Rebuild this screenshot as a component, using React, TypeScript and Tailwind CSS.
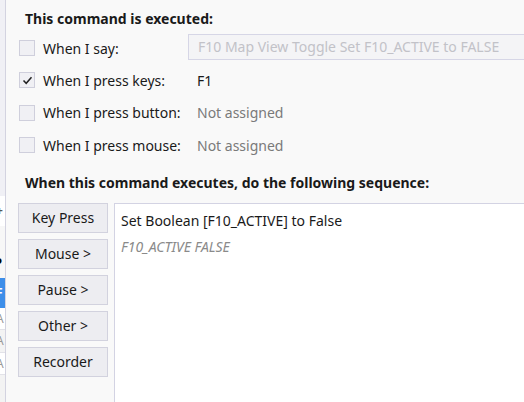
const font = "font-['Segoe_UI','Noto_Sans','Open_Sans',sans-serif]";

interface TriggerRow {
  label: string;
  value: string;
  checked: boolean;
  muted: boolean;
}

const triggers: TriggerRow[] = [
  { label: "When I press keys:", value: "F1", checked: true, muted: false },
  { label: "When I press button:", value: "Not assigned", checked: false, muted: true },
  { label: "When I press mouse:", value: "Not assigned", checked: false, muted: true },
];

const actions = ["Key Press", "Mouse >", "Pause >", "Other >", "Recorder"];

const Checkbox = ({ checked }: { checked: boolean }) => (
  <div className="w-[16px] h-[16px] border border-[#cfcfdc] bg-[#f0f0f4] flex items-center justify-center shrink-0">
    {checked && (
      <svg width="11" height="11" viewBox="0 0 11 11">
        <path d="M1.5 5.5 L4.2 8.3 L9.5 2.2" fill="none" stroke="#222" strokeWidth="1.5" />
      </svg>
    )}
  </div>
);

const SideSliver = () => (
  <div className="w-[6px] shrink-0 border-r border-[#d3d3e0] flex flex-col text-[12px] overflow-hidden">
    <div className="h-[196px] bg-[#f0f0f5]" />
    <div className="h-[30px] bg-white flex items-center text-[#555] font-bold">
      <span className="-ml-[4px]">+</span>
    </div>
    <div className="h-[22px] bg-[#f7f7f7]" />
    <div className="h-[30px] bg-[#f7f7f7] flex items-center font-bold text-black text-[13px]">
      <span className="-ml-[6px]">P</span>
    </div>
    <div className="h-[30px] bg-[#3d8ee9] flex items-center text-white font-bold">
      <span className="-ml-[4px]">F</span>
    </div>
    <div className="h-[22px] bg-white border-b border-[#e2e2e8] text-[#999] flex items-center">
      <span className="-ml-[4px]">A</span>
    </div>
    <div className="h-[23px] bg-[#f3f3f3] border-b border-[#e2e2e8] text-[#999] flex items-center">
      <span className="-ml-[4px]">A</span>
    </div>
    <div className="h-[22px] bg-white border-b border-[#e2e2e8] text-[#999] flex items-center">
      <span className="-ml-[4px]">A</span>
    </div>
    <div className="flex-1 bg-[#f3f3f3]" />
  </div>
);

const App = () => {
  return (
    <div className={`w-[524px] h-[402px] overflow-hidden bg-[#f9f9f9] flex ${font} text-[14px] text-[#1a1a1a]`}>
      <SideSliver />
      <div className="flex-1 flex flex-col pl-[12px]">
        <div className="pt-[8px] pl-[7px] font-bold h-[22px] leading-[22px]">This command is executed:</div>

        <div className="mt-[10px] pl-[1px] flex flex-col">
          <div className="h-[32px] flex items-center">
            <Checkbox checked={false} />
            <span className="ml-[8px] w-[145px]">When I say:</span>
            <div className="flex-1 h-[26px] -mr-[2px] -mt-[3px] border border-[#d6d6e6] border-r-0 bg-[#f4f4f6] flex items-center pl-[9px] text-[#c2c2c8] whitespace-nowrap overflow-hidden">
              F10 Map View Toggle Set F10_ACTIVE to FALSE
            </div>
          </div>
          {triggers.map((row, index) => (
            <div key={"trigger-" + index} className="h-[32.5px] flex items-center">
              <Checkbox checked={row.checked} />
              <span className="ml-[8px] w-[154px]">{row.label}</span>
              <span className={row.muted ? "text-[#7a7a7a]" : "text-[#1a1a1a]"}>{row.value}</span>
            </div>
          ))}
        </div>

        <div className="mt-[10px] pl-[7px] font-bold h-[22px] leading-[22px]">
          When this command executes, do the following sequence:
        </div>

        <div className="mt-[9px] flex flex-1 gap-[6px]">
          <div className="w-[90px] flex flex-col gap-[6px] shrink-0">
            {actions.map((label) => (
              <div
                key={label}
                className="h-[30px] bg-[#ededf1] border border-[#d2d2de] flex items-center justify-center"
              >
                {label}
              </div>
            ))}
          </div>
          <div className="flex-1 bg-white border border-[#d3d3e3] border-r-0 border-b-0 pl-[6px] pt-[7px]">
            <div className="leading-[20px]">Set Boolean [F10_ACTIVE] to False</div>
            <div className="mt-[6px] leading-[20px] italic text-[#8a8a8a]">F10_ACTIVE FALSE</div>
          </div>
        </div>
      </div>
    </div>
  );
};

export default App;
